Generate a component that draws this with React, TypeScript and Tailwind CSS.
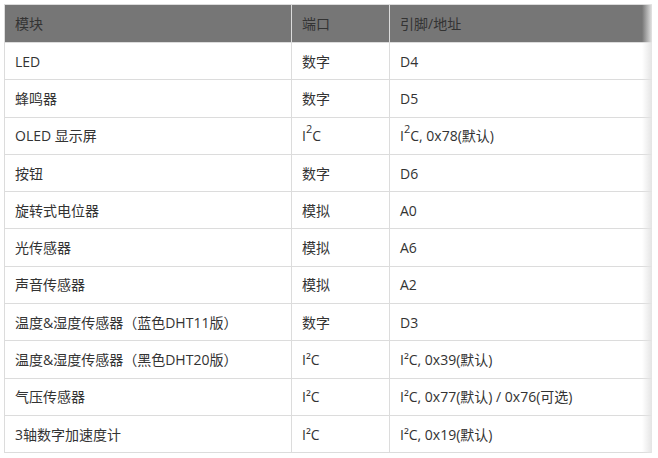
import React from 'react';

type Row = { name: string; port: React.ReactNode; addr: React.ReactNode };

const font = '"Open Sans", "Noto Sans CJK SC", sans-serif';

const I2C = () => (
  <span>
    I<sup className="text-[11px] leading-none relative -top-[3px] align-super">2</sup>C
  </span>
);

const rows: Row[] = [
  { name: 'LED', port: '数字', addr: 'D4' },
  { name: '蜂鸣器', port: '数字', addr: 'D5' },
  { name: 'OLED 显示屏', port: <I2C />, addr: <><I2C />, 0x78(默认)</> },
  { name: '按钮', port: '数字', addr: 'D6' },
  { name: '旋转式电位器', port: '模拟', addr: 'A0' },
  { name: '光传感器', port: '模拟', addr: 'A6' },
  { name: '声音传感器', port: '模拟', addr: 'A2' },
  { name: '温度&湿度传感器（蓝色DHT11版）', port: '数字', addr: 'D3' },
  { name: '温度&湿度传感器（黑色DHT20版）', port: 'I²C', addr: 'I²C, 0x39(默认)' },
  { name: '气压传感器', port: 'I²C', addr: 'I²C, 0x77(默认) / 0x76(可选)' },
  { name: '3轴数字加速度计', port: 'I²C', addr: 'I²C, 0x19(默认)' },
];

export default function App() {
  return (
    <div className="w-[658px] h-[458px] bg-white pt-[4px] pl-[4px]" style={{ fontFamily: font }}>
      <div className="relative w-[648px] overflow-hidden">
        <table className="w-[700px] border-collapse text-[14px] text-[#333] table-fixed">
          <colgroup>
            <col className="w-[287px]" />
            <col className="w-[98px]" />
            <col />
          </colgroup>
          <thead>
            <tr className="h-[38px] bg-[#767676]">
              <th className="border border-[#dcdcdc] px-[10px] text-left font-normal">模块</th>
              <th className="border border-[#dcdcdc] px-[10px] text-left font-normal">端口</th>
              <th className="border border-[#dcdcdc] px-[10px] text-left font-normal">引脚/地址</th>
            </tr>
          </thead>
          <tbody>
            {rows.map((r, i) => (
              <tr key={i} className="h-[37.3px]">
                <td className="border border-[#dcdcdc] px-[10px] py-0 whitespace-nowrap">{r.name}</td>
                <td className="border border-[#dcdcdc] px-[10px] py-0 whitespace-nowrap">{r.port}</td>
                <td className="border border-[#dcdcdc] px-[10px] py-0 whitespace-nowrap">{r.addr}</td>
              </tr>
            ))}
          </tbody>
        </table>
        {/* scroll fade on the right edge */}
        <div className="absolute top-0 right-0 h-full w-[10px] bg-gradient-to-r from-white/0 to-[#e4e4e4]" />
      </div>
    </div>
  );
}
